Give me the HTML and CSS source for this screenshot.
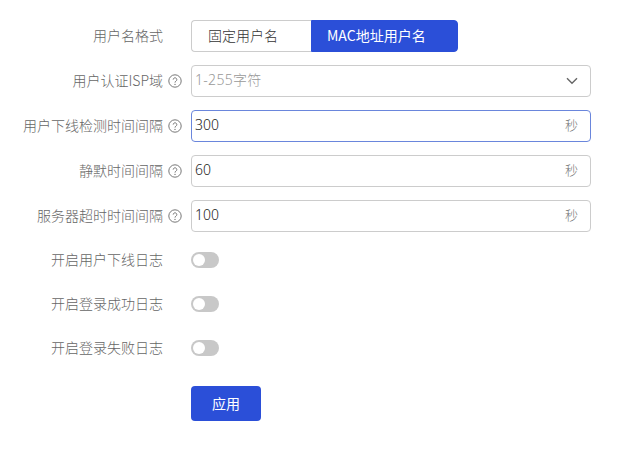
FILE: index.html
```html
<!DOCTYPE html>
<html lang="en">
<head>
  <meta charset="UTF-8">
  <title>用户名格式</title>
  <meta name="viewport" content="width=device-width, initial-scale=1.0">
  <link rel="stylesheet" href="styles.css">
</head>
<body>

  <form class="form">
    <div class="form-group">
      <div class="form-row">
        <div class="form-label"><span class="label-text">用户名格式</span><span class="label-help"></span></div>
        <div class="segment">
          <button type="button" class="segment-btn">固定用户名</button>
          <button type="button" class="segment-btn active">MAC地址用户名</button>
        </div>
      </div>

      <div class="form-row">
        <div class="form-label">
          <span class="label-text">用户认证ISP域</span>
          <span class="label-help"><svg class="help-icon" viewBox="0 0 14 14"><circle cx="7" cy="7" r="6.2"/><path d="M5.2 5.6a1.8 1.8 0 1 1 2.8 1.5c-.6.4-1 .7-1 1.5"/><circle class="dot" cx="7" cy="10.4" r=".7"/></svg></span>
        </div>
        <div class="field">
          <input class="field-input" type="text" placeholder="1-255字符">
          <svg class="chevron" viewBox="0 0 12 8"><path d="M1 1.2l5 5 5-5"/></svg>
        </div>
      </div>

      <div class="form-row">
        <div class="form-label">
          <span class="label-text">用户下线检测时间间隔</span>
          <span class="label-help"><svg class="help-icon" viewBox="0 0 14 14"><circle cx="7" cy="7" r="6.2"/><path d="M5.2 5.6a1.8 1.8 0 1 1 2.8 1.5c-.6.4-1 .7-1 1.5"/><circle class="dot" cx="7" cy="10.4" r=".7"/></svg></span>
        </div>
        <div class="field focus">
          <input class="field-input" type="text" value="300">
          <span class="field-unit">秒</span>
        </div>
      </div>

      <div class="form-row">
        <div class="form-label">
          <span class="label-text">静默时间间隔</span>
          <span class="label-help"><svg class="help-icon" viewBox="0 0 14 14"><circle cx="7" cy="7" r="6.2"/><path d="M5.2 5.6a1.8 1.8 0 1 1 2.8 1.5c-.6.4-1 .7-1 1.5"/><circle class="dot" cx="7" cy="10.4" r=".7"/></svg></span>
        </div>
        <div class="field">
          <input class="field-input" type="text" value="60">
          <span class="field-unit">秒</span>
        </div>
      </div>

      <div class="form-row">
        <div class="form-label">
          <span class="label-text">服务器超时时间间隔</span>
          <span class="label-help"><svg class="help-icon" viewBox="0 0 14 14"><circle cx="7" cy="7" r="6.2"/><path d="M5.2 5.6a1.8 1.8 0 1 1 2.8 1.5c-.6.4-1 .7-1 1.5"/><circle class="dot" cx="7" cy="10.4" r=".7"/></svg></span>
        </div>
        <div class="field">
          <input class="field-input" type="text" value="100">
          <span class="field-unit">秒</span>
        </div>
      </div>
    </div>

    <div class="switch-group">
      <div class="switch-row">
        <div class="form-label"><span class="label-text">开启用户下线日志</span><span class="label-help"></span></div>
        <span class="switch"></span>
      </div>
      <div class="switch-row">
        <div class="form-label"><span class="label-text">开启登录成功日志</span><span class="label-help"></span></div>
        <span class="switch"></span>
      </div>
      <div class="switch-row">
        <div class="form-label"><span class="label-text">开启登录失败日志</span><span class="label-help"></span></div>
        <span class="switch"></span>
      </div>
    </div>

    <div class="form-actions">
      <button type="button" class="apply-btn">应用</button>
    </div>
  </form>

</body>
</html>
```

FILE: styles.css
```css
body {
  font-family: "Noto Sans CJK SC", "Noto Sans", sans-serif;
  background-color: #fff;
  margin: 0;
  padding: 20px 0 0;
  color: #333;
  font-size: 14px;
  font-weight: 300;
}

.form-group {
  display: flex;
  flex-direction: column;
  gap: 13px;
}

.form-row {
  display: flex;
  align-items: center;
  height: 32px;
}

.form-label {
  display: flex;
  align-items: center;
  width: 191px;
  flex-shrink: 0;
  color: #666;
}

.label-text {
  width: 163px;
  text-align: right;
  white-space: nowrap;
  line-height: 20px;
  padding-bottom: 3px;
}

.label-help {
  display: flex;
  width: 28px;
  padding-left: 5px;
  box-sizing: border-box;
}

.help-icon {
  width: 14px;
  height: 14px;
  fill: none;
  stroke: #777;
  stroke-width: 1;
}

.help-icon .dot {
  fill: #777;
  stroke: none;
}

.segment {
  display: flex;
  height: 32px;
}

.segment-btn {
  font-family: inherit;
  font-size: 14px;
  font-weight: 300;
  color: #333;
  background: #fff;
  border: 1px solid #ccc;
  border-right: none;
  border-radius: 4px 0 0 4px;
  width: 120px;
  padding: 0 0 3px 16px;
  text-align: left;
}

.segment-btn.active {
  width: 147px;
  background-color: #2b4fd8;
  border: 1px solid #2b4fd8;
  border-radius: 0 4px 4px 0;
  color: #fff;
  font-weight: 400;
  padding-left: 15px;
}

.field {
  display: flex;
  align-items: center;
  width: 400px;
  height: 32px;
  box-sizing: border-box;
  border: 1px solid #ccc;
  border-radius: 4px;
  padding: 0 12px 0 3px;
}

.field.focus {
  border-color: #6a86dc;
}

.field-input {
  flex: 1;
  min-width: 0;
  border: none;
  outline: none;
  padding: 0 0 4px;
  font-family: "Noto Sans", "Noto Sans CJK SC", sans-serif;
  font-size: 14px;
  font-weight: 300;
  color: #222;
}

.field-input::placeholder {
  color: #999;
  opacity: 1;
  letter-spacing: 0.3px;
}

.field-unit {
  color: #777;
  font-size: 13px;
  font-weight: 300;
  padding-bottom: 3px;
}

.chevron {
  width: 12px;
  height: 8px;
  fill: none;
  stroke: #666;
  stroke-width: 1.4;
}

.switch-group {
  margin-top: 6px;
}

.switch-row {
  display: flex;
  align-items: center;
  height: 44px;
}

.switch {
  display: flex;
  align-items: center;
  width: 28px;
  height: 16px;
  padding: 0 2px;
  box-sizing: border-box;
  border-radius: 8px;
  background-color: #c8c8c8;
}

.switch::before {
  content: "";
  width: 12px;
  height: 12px;
  border-radius: 50%;
  background-color: #fff;
}

.form-actions {
  margin: 16px 0 0 191px;
}

.apply-btn {
  display: block;
  width: 70px;
  height: 35px;
  padding: 0 0 2px;
  font-family: inherit;
  font-size: 14px;
  font-weight: 400;
  color: #fff;
  background-color: #2b4fd8;
  border: none;
  border-radius: 4px;
}
```
